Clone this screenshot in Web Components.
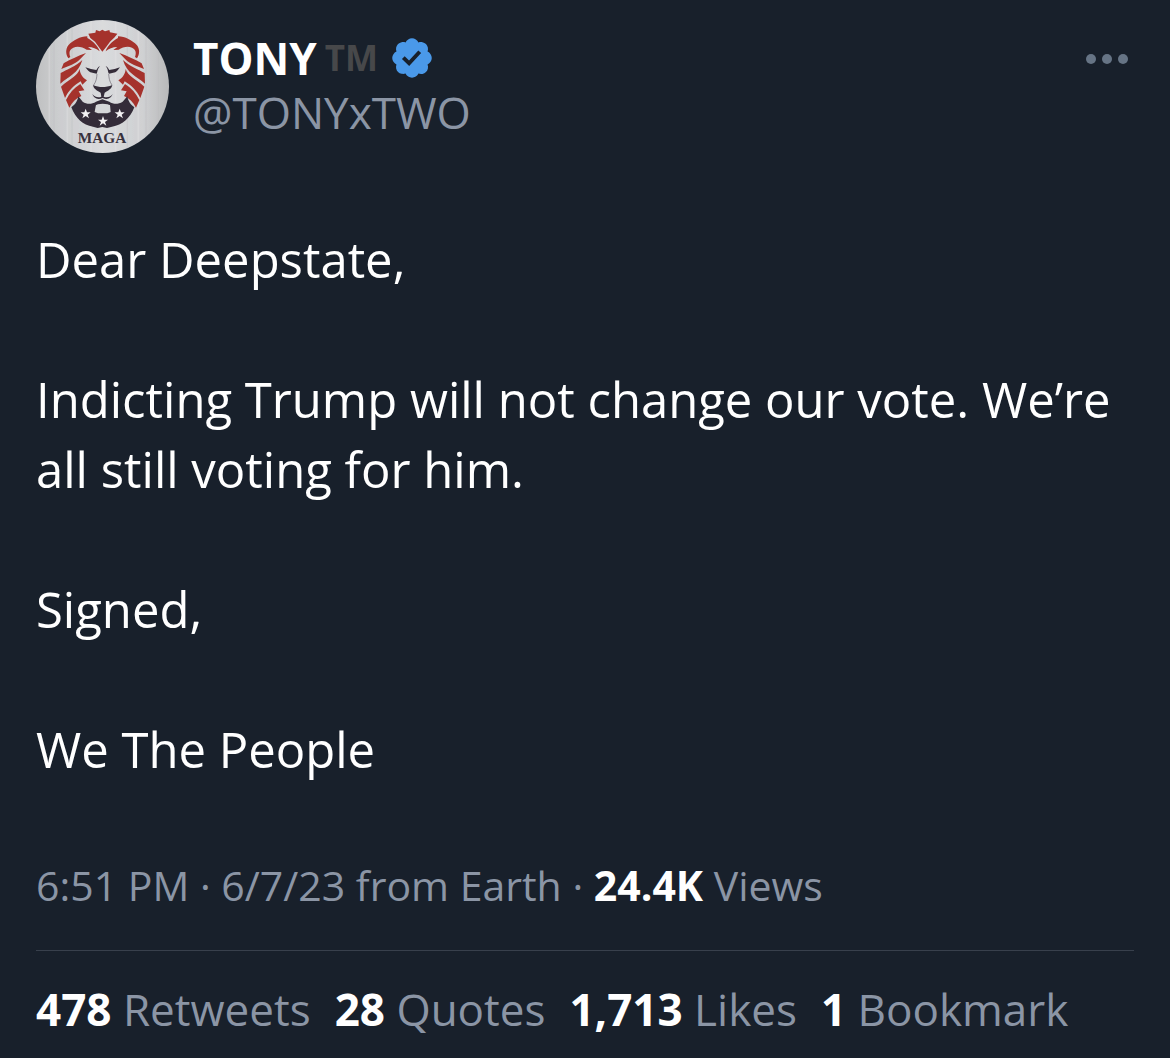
<!DOCTYPE html>
<html lang="en">
<head>
  <meta charset="UTF-8">
  <meta name="viewport" content="width=device-width, initial-scale=1.0">
  <title>TONY (@TONYxTWO)</title>
  <style>
    body {
      margin: 0;
      background: #18202b;
      color: #ffffff;
      font-family: "Open Sans", "Noto Sans", sans-serif;
    }
  </style>
</head>
<body>

  <tweet-card>
    <tweet-author slot="author" handle="TONYxTWO" mark="TM">TONY</tweet-author>

    <p>Dear Deepstate,</p>
    <p>Indicting Trump will not change our vote. We’re all still voting for him.</p>
    <p>Signed,</p>
    <p>We The People</p>

    <tweet-meta slot="meta" views="24.4K">6:51 PM · 6/7/23 from Earth</tweet-meta>

    <tweet-stat slot="stats" count="478">Retweets</tweet-stat>
    <tweet-stat slot="stats" count="28">Quotes</tweet-stat>
    <tweet-stat slot="stats" count="1,713">Likes</tweet-stat>
    <tweet-stat slot="stats" count="1">Bookmark</tweet-stat>
  </tweet-card>

  <script>
    class LionAvatar extends HTMLElement {
      constructor() {
        super();
        this.attachShadow({ mode: "open" });

        this.shadowRoot.innerHTML = `
          <style>
            :host {
              display: block;
              flex: none;
              width: 133px;
              height: 133px;
            }

            svg {
              display: block;
              width: 100%;
              height: 100%;
            }

            text {
              font: bold 46px "Liberation Serif", serif;
              fill: #38313d;
            }
          </style>

          <svg viewBox="18 18 399 399" role="img" aria-label="Lion logo">
            <defs>
              <linearGradient id="wood">
                <stop offset="0" stop-color="#bfc0c1"/>
                <stop offset="0.15" stop-color="#cbccce"/>
                <stop offset="0.5" stop-color="#dadbdd"/>
                <stop offset="0.8" stop-color="#d0d1d3"/>
                <stop offset="1" stop-color="#b8b9ba"/>
              </linearGradient>
              <clipPath id="round"><circle cx="217.500" cy="217.500" r="199.500"/></clipPath>
            </defs>
            <g clip-path="url(#round)">
              <rect x="18" y="18" width="399" height="399" fill="url(#wood)"/>
              <!-- boards -->
              <path d="M72 18V417M126 18V417M292 18V417M348 18V417M385 18V417" stroke="#b9babc" stroke-width="2" opacity=".6"/>
              <path d="M58 18V417M112 18V417M183 18V417M257 18V417M325 18V417" stroke="#e6e6e8" stroke-width="5" opacity=".3"/>
            </g>

            <!-- mane -->
            <g fill="#a5322c">
              <path d="M198 48L209 52L217 47L225 52L238 48L240 55L262 59L254 70L240 83L229 98L217 113L206 98L195 83L181 72L175 59L196 56Z"/>
              <g id="side">
                <path d="M172 67C150 68 130 78 115 94C106 106 107 122 115 133L121 129C116 115 119 106 130 101C142 95 158 99 170 107L186 108L174 99C188 99 200 104 209 112C204 96 190 82 172 72Z"/>
                <path d="M168 117C144 126 119 137 101 148L94 165C113 158 136 150 150 136Z"/>
                <path d="M157 138C137 157 112 166 92 177L91 209C116 187 146 178 157 138Z"/>
                <path d="M149 165C143 187 117 195 93 218L105 252C116 229 134 213 152 202L157 212L171 199C158 191 150 180 149 165Z"/>
                <path d="M151 210C132 222 117 239 108 258L118 281C127 264 138 253 154 246L146 232L163 229Z"/>
              </g>
              <use href="#side" transform="translate(436 0) scale(-1 1)"/>
            </g>

            <!-- beard -->
            <path d="M145 247L158 263C171 272 185 271 198 263L217 256L238 263C251 272 265 271 278 263L292 247C295 264 303 273 313 280C300 313 277 333 246 338L231 342L217 339L203 342L189 338C158 333 137 313 124 280C134 273 142 264 145 247Z" fill="#342c39"/>
            <path d="M198 272L209 267H227L240 272L242 294L232 298H204L194 294Z" fill="#d5d6d8"/>
            <path d="M192 276C197 265 207 261 218 261S239 265 246 276C237 271 229 269 218 269S200 271 192 276Z" fill="#342c39"/>

            <!-- face -->
            <g fill="#342c39">
              <path d="M166 160L183 165L199 168C204 160 207 157 210 157C202 164 203 175 200 179L181 175C175 171 170 165 166 160Z"/>
              <path d="M270 160L254 165L238 168C233 160 230 157 227 157C235 164 233 175 237 179L256 175C262 171 266 165 270 160Z"/>
              <path d="M189 213C199 218 208 219 217 219S238 218 247 213C245 224 236 229 224 236L221 248C231 252 242 249 248 240C244 252 233 259 218 252C202 259 191 252 187 240C194 249 205 252 214 248L212 236C199 229 191 224 189 213Z"/>
            </g>
            <path d="M201 180C200 192 199 202 191 213M236 180C237 192 238 202 246 213" fill="none" stroke="#6b6570" stroke-width="2"/>

            <!-- stars -->
            <g fill="#f3f1f3">
              <path id="star" d="M167 284L171 295H182L173 302L177 313L167 306L157 313L161 302L152 295H163Z"/>
              <use href="#star" x="52" y="22"/>
              <use href="#star" x="102"/>
            </g>
            <text x="216" y="386" text-anchor="middle">MAGA</text>
          </svg>
        `;
      }
    }

    class VerifiedBadge extends HTMLElement {
      constructor() {
        super();
        this.attachShadow({ mode: "open" });

        this.shadowRoot.innerHTML = `
          <style>
            :host {
              display: block;
              flex: none;
              width: 40px;
              height: 40px;
            }

            svg {
              display: block;
              fill: #4a99e9;
            }
          </style>

          <svg viewBox="1.500 1.500 19 19" role="img" aria-label="Verified account">
            <path d="M20.396 11c-.018-.646-.215-1.275-.57-1.816-.354-.54-.852-.972-1.438-1.246.223-.607.27-1.264.14-1.897-.131-.634-.437-1.218-.882-1.687-.47-.445-1.053-.75-1.687-.882-.633-.13-1.29-.083-1.897.14-.273-.587-.704-1.086-1.245-1.44S11.647 1.62 11 1.604c-.646.017-1.273.213-1.813.568s-.969.854-1.24 1.44c-.608-.223-1.267-.272-1.902-.14-.635.13-1.22.436-1.69.882-.445.47-.749 1.055-.878 1.688-.13.633-.08 1.29.144 1.896-.587.274-1.087.705-1.443 1.245-.356.54-.555 1.17-.574 1.817.02.647.218 1.276.574 1.817.356.54.856.972 1.443 1.245-.224.606-.274 1.263-.144 1.896.13.634.433 1.218.877 1.688.47.443 1.054.747 1.687.878.633.132 1.29.084 1.897-.136.274.586.705 1.084 1.246 1.439.54.354 1.17.551 1.816.569.647-.016 1.276-.213 1.817-.567s.972-.854 1.245-1.44c.604.239 1.266.296 1.903.164.636-.132 1.22-.447 1.68-.907.46-.46.776-1.044.908-1.681s.075-1.299-.165-1.903c.586-.274 1.084-.705 1.439-1.246.354-.54.551-1.17.569-1.816zM9.662 14.85l-3.429-3.428 1.293-1.302 2.072 2.072 4.4-4.794 1.347 1.246z"/>
          </svg>
        `;
      }
    }

    class TweetAuthor extends HTMLElement {
      constructor() {
        super();
        this.attachShadow({ mode: "open" });

        this.shadowRoot.innerHTML = `
          <style>
            :host {
              display: flex;
              align-items: flex-start;
              gap: 24px;
              font-size: 44px;
              line-height: 54px;
            }

            .names {
              flex: 1;
              min-width: 0;
              padding-top: 11px;
            }

            .name {
              display: flex;
              align-items: center;
              font-weight: bold;
            }

            .mark {
              margin: 0 14px 0 8px;
              font-size: 35px;
              color: #47484a;
            }

            a {
              color: #8b95a5;
              text-decoration: none;
            }

            button {
              display: flex;
              padding: 33px 6px;
              border: none;
              background: none;
              cursor: pointer;
            }

            button svg {
              display: block;
              fill: #667485;
            }
          </style>

          <lion-avatar></lion-avatar>
          <div class="names">
            <div class="name">
              <slot></slot>
              <span class="mark"></span>
              <verified-badge></verified-badge>
            </div>
            <a></a>
          </div>
          <button type="button" aria-label="More">
            <svg width="42" height="12" viewBox="0 0 42 12">
              <circle cx="5" cy="6" r="5"/>
              <circle cx="21" cy="6" r="5"/>
              <circle cx="37" cy="6" r="5"/>
            </svg>
          </button>
        `;
      }

      connectedCallback() {
        const handle = this.getAttribute("handle");
        const link = this.shadowRoot.querySelector("a");
        link.href = "#" + handle;
        link.textContent = "@" + handle;
        this.shadowRoot.querySelector(".mark").textContent = this.getAttribute("mark");
      }
    }

    class TweetMeta extends HTMLElement {
      constructor() {
        super();
        this.attachShadow({ mode: "open" });

        this.shadowRoot.innerHTML = `
          <style>
            :host {
              display: block;
              font-size: 41px;
              line-height: 60px;
              color: #8b95a5;
            }

            b {
              color: #ffffff;
            }
          </style>

          <slot></slot> · <b></b> Views
        `;
      }

      connectedCallback() {
        this.shadowRoot.querySelector("b").textContent = this.getAttribute("views");
      }
    }

    class TweetStat extends HTMLElement {
      constructor() {
        super();
        this.attachShadow({ mode: "open" });

        this.shadowRoot.innerHTML = `
          <style>
            :host {
              display: block;
              font-size: 44px;
              line-height: 60px;
            }

            a {
              color: #8b95a5;
              text-decoration: none;
              white-space: nowrap;
            }

            b {
              color: #ffffff;
            }
          </style>

          <a href="#stats"><b></b> <slot></slot></a>
        `;
      }

      connectedCallback() {
        this.shadowRoot.querySelector("b").textContent = this.getAttribute("count");
      }
    }

    class TweetCard extends HTMLElement {
      constructor() {
        super();
        this.attachShadow({ mode: "open" });

        this.shadowRoot.innerHTML = `
          <style>
            :host {
              display: block;
              padding: 20px 36px 18px;
            }

            .text {
              margin: 71px 0;
              font-size: 49px;
              line-height: 70px;
            }

            ::slotted(p) {
              margin: 0 0 70px;
            }

            ::slotted(p:last-of-type) {
              margin-bottom: 0;
            }

            footer {
              display: flex;
              flex-wrap: wrap;
              gap: 0 24px;
              margin-top: 35px;
              padding-top: 28px;
              border-top: 1px solid #38404c;
            }
          </style>

          <article>
            <slot name="author"></slot>
            <div class="text"><slot></slot></div>
            <slot name="meta"></slot>
            <footer id="stats"><slot name="stats"></slot></footer>
          </article>
        `;
      }
    }

    customElements.define("lion-avatar", LionAvatar);
    customElements.define("verified-badge", VerifiedBadge);
    customElements.define("tweet-author", TweetAuthor);
    customElements.define("tweet-meta", TweetMeta);
    customElements.define("tweet-stat", TweetStat);
    customElements.define("tweet-card", TweetCard);
  </script>
</body>
</html>
